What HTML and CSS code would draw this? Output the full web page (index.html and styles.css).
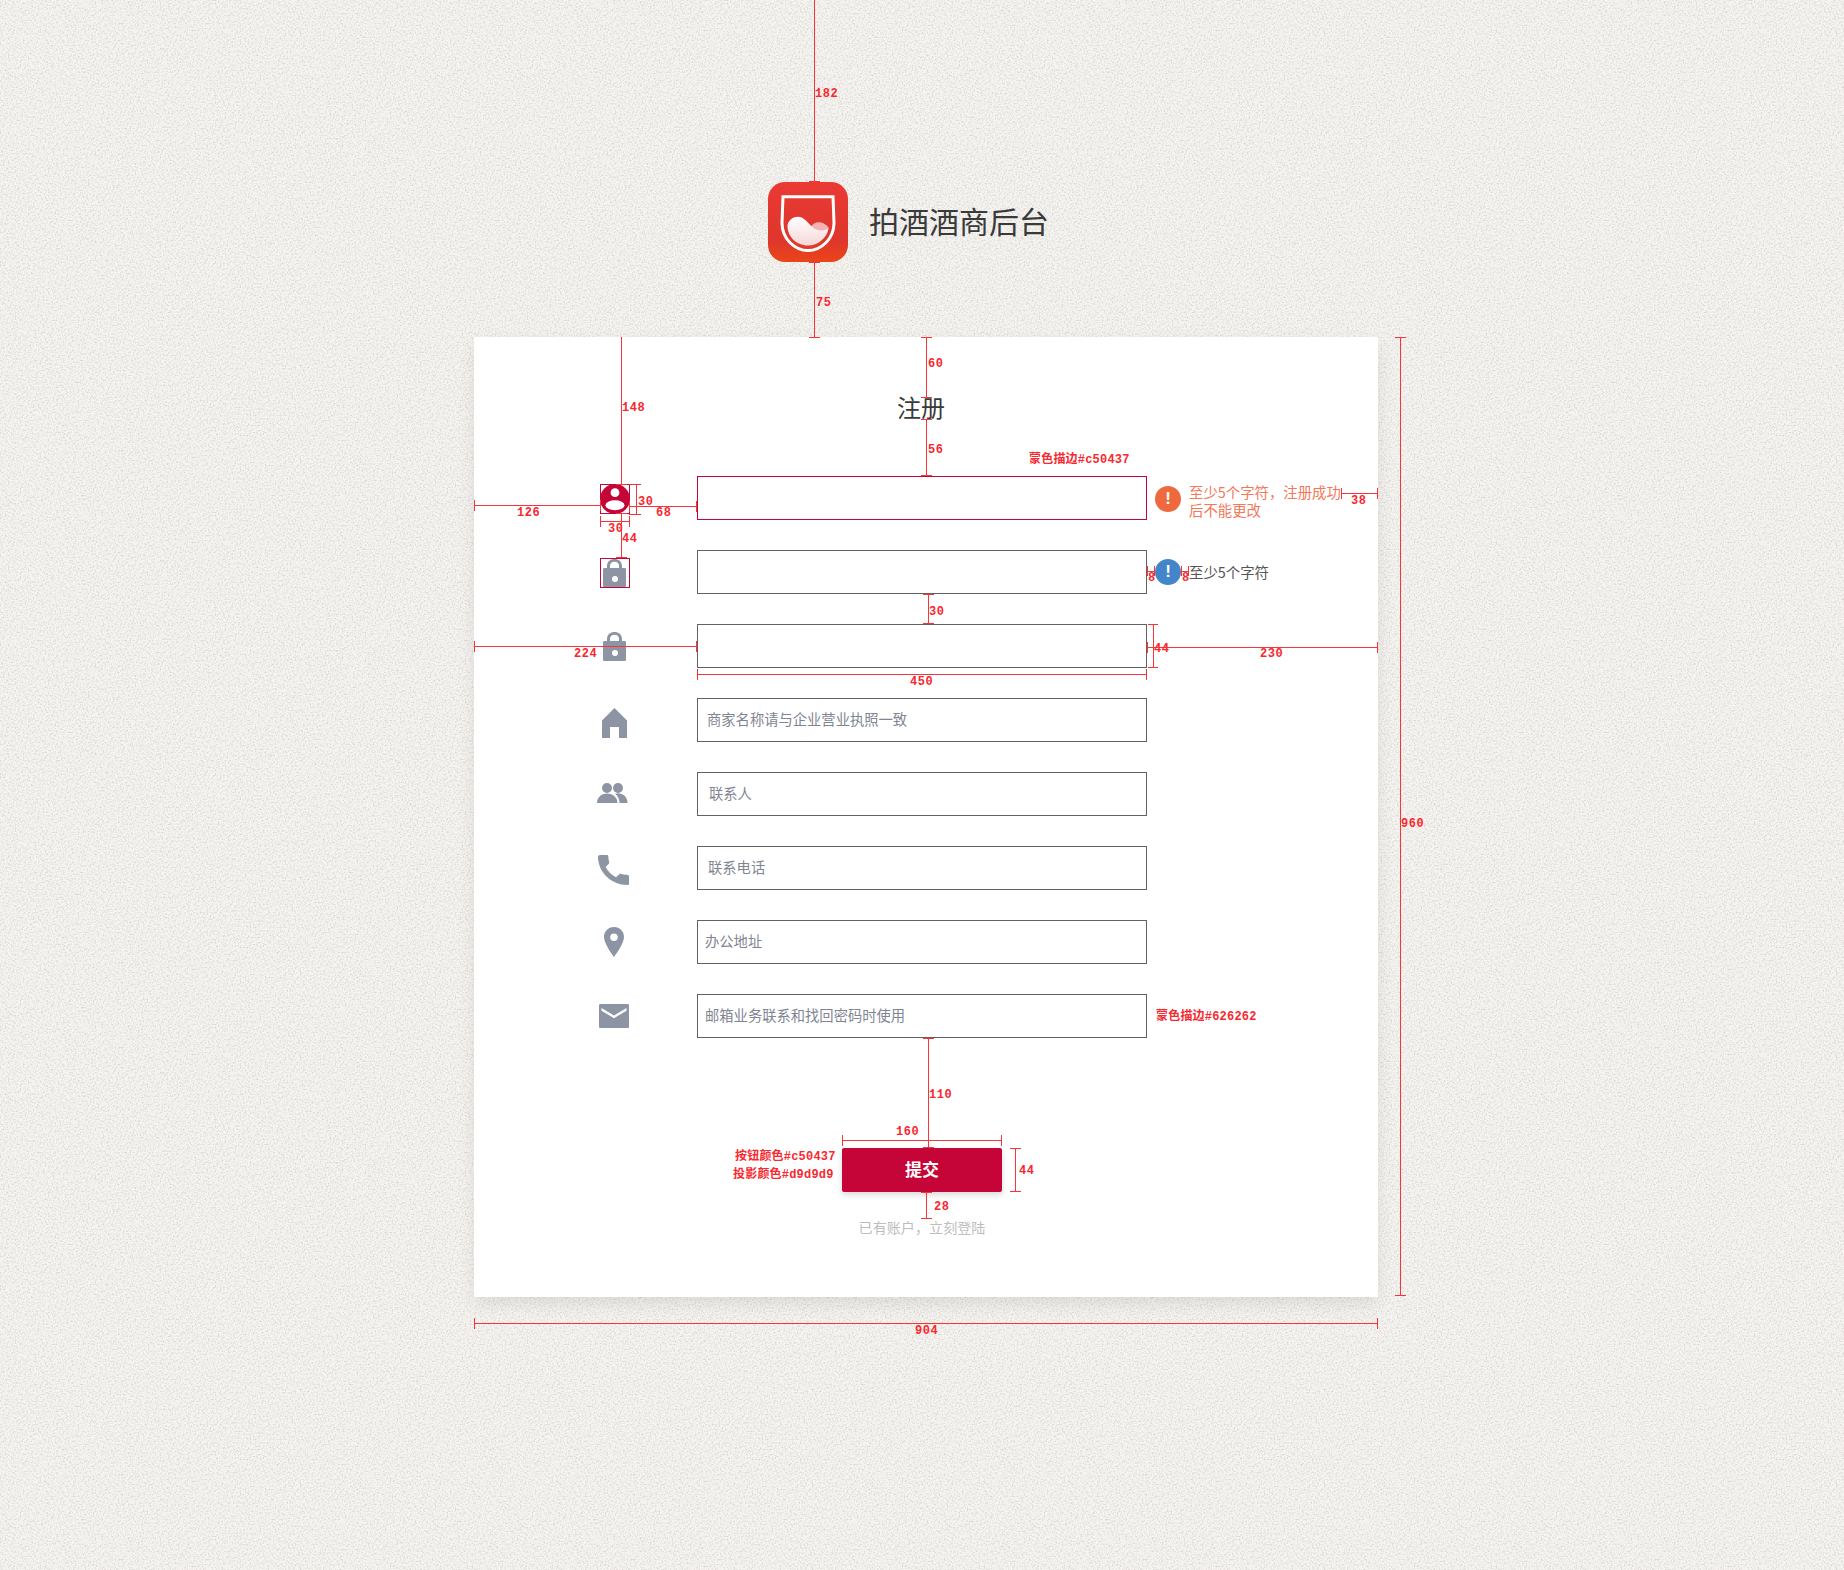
FILE: index.html
```html
<!DOCTYPE html>
<html lang="zh-CN">
<head>
<meta charset="utf-8">
<title>拍酒酒商后台 注册</title>
<link rel="stylesheet" href="styles.css">
</head>
<body>
<div class="page">
  <header class="brand">
    <svg class="logo" viewBox="0 0 80 80" aria-hidden="true">
      <defs>
        <linearGradient id="logoBg" x1="0" y1="0" x2="0" y2="1">
          <stop offset="0" stop-color="#ea3a33"/>
          <stop offset=".72" stop-color="#de362c"/>
          <stop offset="1" stop-color="#ea4519"/>
        </linearGradient>
        <linearGradient id="wave" x1="0" y1="0" x2="0" y2="1">
          <stop offset="0" stop-color="#ffffff"/>
          <stop offset="1" stop-color="#f5d8d8"/>
        </linearGradient>
      </defs>
      <rect width="80" height="80" rx="17" fill="url(#logoBg)"/>
      <path d="M15 14.800H65L66 41C66 57 53 68.600 40 68.600S14 57 14 41Z" fill="none" stroke="#fff" stroke-width="3"/>
      <path d="M42 46C46 39 54 38 61 46C58 50 50 51 45 49Z" fill="#f3b2b4"/>
      <path d="M19.500 43C21 36 30 32 36 37C41 41 45 47 50 48C54 49 58 48 60.500 46.500C59 56 50 63.500 40 63.500C28 63.500 19 54 19.500 43Z" fill="url(#wave)"/>
    </svg>
    <h1 class="brand-name">拍酒酒商后台</h1>
  </header>

  <main class="panel">
    <h2 class="panel-title">注册</h2>
    <div class="form">
      <svg class="ico" viewBox="0 0 30 30" aria-hidden="true">
        <circle cx="15" cy="16" r="15" fill="#c50437"/>
        <circle cx="15" cy="9.700" r="4.400" fill="#fff"/>
        <ellipse cx="15" cy="22.300" rx="9.500" ry="5" fill="#fff"/>
      </svg>
      <div class="field field-active"></div>
      <div class="hint hint-error">
        <span class="badge badge-error">!</span>
        <span class="hint-text">至少5个字符，注册成功后不能更改</span>
      </div>

      <svg class="ico" viewBox="0 0 30 30" aria-hidden="true">
        <path class="ico-fill" fill-rule="evenodd" d="M7 11V9C7 4.500 10.500 2 14.500 2S22 4.500 22 9V11H24.500C25.500 11 26 11.500 26 12.500V28.500C26 29.500 25.500 30 24.500 30H4.500C3.500 30 3 29.500 3 28.500V12.500C3 11.500 3.500 11 4.500 11ZM10 11H19V9C19 6.500 17.500 4.800 14.500 4.800S10 6.500 10 9ZM15 19A3 3 0 1 0 15 25 3 3 0 1 0 15 19Z"/>
      </svg>
      <div class="field"></div>
      <div class="hint">
        <span class="badge badge-info">!</span>
        <span class="hint-text">至少5个字符</span>
      </div>

      <svg class="ico" viewBox="0 0 30 30" aria-hidden="true">
        <path class="ico-fill" fill-rule="evenodd" d="M7 10V8C7 3.500 10.500 1 14.500 1S22 3.500 22 8V10H24.500C25.500 10 26 10.500 26 11.500V28.500C26 29.500 25.500 30 24.500 30H4.500C3.500 30 3 29.500 3 28.500V11.500C3 10.500 3.500 10 4.500 10ZM10 10H19V8C19 5.500 17.500 3.800 14.500 3.800S10 5.500 10 8ZM15 19A3 3 0 1 0 15 25 3 3 0 1 0 15 19Z"/>
      </svg>
      <div class="field"></div>
      <div class="hint"></div>

      <svg class="ico" viewBox="0 0 30 30" aria-hidden="true">
        <path class="ico-fill" d="M14.500 3L27 15.500V33H19V22H10V33H2V15.500Z"/>
      </svg>
      <div class="field field-name">商家名称请与企业营业执照一致</div>
      <div class="hint"></div>

      <svg class="ico" viewBox="0 0 30 30" aria-hidden="true">
        <circle class="ico-fill" cx="7" cy="9" r="5"/>
        <circle class="ico-fill" cx="18" cy="9" r="5"/>
        <path class="ico-fill" d="M-3 24C-3 17.500 2.500 14.500 7 14.500S17.500 17.500 17.500 24Z"/>
        <path class="ico-fill" d="M15 14.800C16 14.500 17 14.300 18 14.300C23 14.300 27.500 18 27.500 24H19.500C19.500 20 17.500 16.500 15 14.800Z"/>
      </svg>
      <div class="field field-contact">联系人</div>
      <div class="hint"></div>

      <svg class="ico" viewBox="0 0 30 30" aria-hidden="true">
        <path class="ico-fill" d="M.5 2H6.800C7.800 2 8.300 2.500 8.300 3.500C8.300 5.500 8.600 7.300 9.200 9C9.400 9.600 9.300 10.200 8.800 10.700L5.700 14C8 18.500 11.500 22 16 24.300L19.300 21.200C19.800 20.700 20.400 20.600 21 20.800C22.700 21.400 24.500 21.700 26.500 21.700C27.500 21.700 29 22.200 29 23.200V30.500C29 31.500 28.500 32 27.500 32C11.500 32 -2 19.500 -2 3.500C-2 2.500 -.5 2 .5 2Z"/>
      </svg>
      <div class="field field-phone">联系电话</div>
      <div class="hint"></div>

      <svg class="ico" viewBox="0 0 30 30" aria-hidden="true">
        <path class="ico-fill" fill-rule="evenodd" d="M14 0C20 0 24 4.500 24 10C24 17 14 30 14 30S4 17 4 10C4 4.500 8 0 14 0ZM14 6.500A3.800 3.800 0 1 0 14 14.100 3.800 3.800 0 1 0 14 6.500Z"/>
      </svg>
      <div class="field field-office">办公地址</div>
      <div class="hint"></div>

      <svg class="ico" viewBox="0 0 30 30" aria-hidden="true">
        <path class="ico-fill" fill-rule="evenodd" d="M.5 3H27.500C28.500 3 29 3.500 29 4.500V25.500C29 26.500 28.500 27 27.500 27H.5C-.5 27 -1 26.500 -1 25.500V4.500C-1 3.500 -.5 3 .5 3ZM1.500 7L14 14.400 26.500 7V9.800L14 17.200 1.500 9.800Z"/>
      </svg>
      <div class="field field-mail">邮箱业务联系和找回密码时使用</div>
      <div class="hint"></div>
    </div>

    <button class="submit" type="button">提交</button>
    <p class="login-link">已有账户，立刻登陆</p>
  </main>

  <svg class="marks" viewBox="0 0 1844 1570" aria-hidden="true">
    <rect class="box" x="600.500" y="484.500" width="29" height="29"/>
    <rect class="box" x="600.500" y="558.500" width="29" height="29"/>
    <path class="line" d="
      M814.500 0V181M809 181.500H820
      M814.500 262V337M809 262.500H820M809 337.500H820
      M926.500 337V397M921 337.500H932M921 397.500H932
      M926.500 420V476M921 419.500H932M921 475.500H932
      M621.500 337V484M616 484.500H627
      M621.500 514V558M616 513.500H627M616 557.500H627
      M474 505.500H600M474.500 500V511M600.500 500V511
      M629 506.500H697M629.500 501V512M696.500 501V512
      M629 484.500H641M629 514.500H641M636.500 484V514
      M600 521.500H629M600.500 516V527M629.500 516V527
      M474 646.500H697M474.500 641V652M696.500 641V652
      M697 674.500H1147M697.500 669V680M1146.500 669V680
      M1153.500 624V667M1148 624.500H1158M1148 667.500H1158
      M1147 647.500H1378M1147.500 642V653M1377.500 642V653
      M1341 493.500H1378M1341.500 488V499M1377.500 488V499
      M1147 571.500H1155M1147.500 566V576M1154.500 566V576
      M1181 571.500H1189M1181.500 566V576M1188.500 566V576
      M928.500 594V624M923 594.500H934M923 623.500H934
      M1400.500 337V1295M1395 337.500H1406M1395 1295.500H1406
      M474 1323.500H1378M474.500 1318V1329M1377.500 1318V1329
      M928.500 1038V1148M923 1038.500H934M923 1147.500H934
      M842 1140.500H1002M842.500 1135V1146M1001.500 1135V1146
      M1015.500 1148V1191M1010 1148.500H1021M1010 1191.500H1021
      M926.500 1192V1219M921 1192.500H932M921 1218.500H932"/>
    <text class="num" x="815" y="97">182</text>
    <text class="num" x="816" y="306">75</text>
    <text class="num" x="928" y="367">60</text>
    <text class="num" x="928" y="453">56</text>
    <text class="num" x="622" y="411">148</text>
    <text class="num" x="517" y="516">126</text>
    <text class="num" x="656" y="516">68</text>
    <text class="num" x="638" y="505">30</text>
    <text class="num" x="608" y="532">30</text>
    <text class="num" x="622" y="542">44</text>
    <text class="num" x="1148" y="581">8</text>
    <text class="num" x="1182" y="581">8</text>
    <text class="num" x="929" y="615">30</text>
    <text class="num" x="574" y="657">224</text>
    <text class="num" x="910" y="685">450</text>
    <text class="num" x="1154" y="652">44</text>
    <text class="num" x="1260" y="657">230</text>
    <text class="num" x="1351" y="504">38</text>
    <text class="num" x="1401" y="827">960</text>
    <text class="num" x="915" y="1334">904</text>
    <text class="num" x="929" y="1098">110</text>
    <text class="num" x="896" y="1135">160</text>
    <text class="num" x="1019" y="1174">44</text>
    <text class="num" x="934" y="1210">28</text>
    <text class="note" x="1029" y="463">蒙色描边#c50437</text>
    <text class="note" x="1156" y="1020">蒙色描边#626262</text>
    <text class="note" x="735" y="1160">按钮颜色#c50437</text>
    <text class="note" x="733" y="1178">投影颜色#d9d9d9</text>
  </svg>
</div>
</body>
</html>
```

FILE: styles.css
```css
* { box-sizing: border-box; }

html, body { margin: 0; padding: 0; }

body {
  font-family: "Noto Sans CJK SC", "Liberation Sans", sans-serif;
  color: #3b3b3b;
  background-color: #f4f2ee;
}

.page {
  position: relative;
  width: 1844px;
  height: 1570px;
  overflow: hidden;
  padding-top: 182px;
  background-color: #f6f4f1;
  background-image: url("data:image/svg+xml,%3Csvg xmlns='http://www.w3.org/2000/svg' width='512' height='512'%3E%3Cfilter id='n' x='0' y='0' width='100%25' height='100%25'%3E%3CfeTurbulence type='fractalNoise' baseFrequency='.6' numOctaves='3' stitchTiles='stitch'/%3E%3CfeColorMatrix values='0 0 0 0 .5 0 0 0 0 .47 0 0 0 0 .42 1.2 0 0 0 -.52'/%3E%3C/filter%3E%3Crect width='512' height='512' filter='url(%23n)'/%3E%3C/svg%3E");
}

.brand {
  display: flex;
  align-items: center;
  gap: 21px;
  height: 80px;
  margin-left: 768px;
}

.logo { width: 80px; height: 80px; flex: none; }

.brand-name {
  margin: 0 0 4px;
  font-size: 30px;
  font-weight: 400;
  line-height: 40px;
  color: #3a3a3a;
}

.panel {
  width: 904px;
  height: 960px;
  margin: 75px 0 0 474px;
  padding-top: 58px;
  background: #fff;
  box-shadow: 0 7px 16px -2px rgba(90, 85, 75, .16);
}

.panel-title {
  margin: 0 0 58px 423px;
  font-size: 24px;
  font-weight: 400;
  line-height: 23px;
  color: #3a3a3a;
}

.form {
  display: grid;
  grid-template-columns: 30px 450px 1fr;
  column-gap: 67px;
  row-gap: 30px;
  padding-left: 126px;
  align-items: center;
}

.ico { width: 30px; height: 30px; overflow: visible; }
.ico-fill { fill: #8d94a3; }

.field {
  height: 44px;
  border: 1px solid #626262;
  font-size: 14.300px;
  line-height: 40px;
  color: #7f8593;
  white-space: nowrap;
}

.field-active { border-color: #c50437; }
.field-name { padding-left: 9px; }
.field-contact { padding-left: 11px; }
.field-phone { padding-left: 10px; }
.field-office { padding-left: 7px; }
.field-mail { padding-left: 7px; }

.hint {
  display: flex;
  align-items: center;
  gap: 8px;
  margin-left: -59px;
  width: 194px;
  font-size: 14.400px;
  line-height: 18px;
  color: #555;
}

.hint-text { flex: 1; }
.hint-error { color: #f4775a; }
.hint-error .hint-text { padding-top: 6px; }

.badge {
  flex: none;
  width: 26px;
  height: 26px;
  border-radius: 50%;
  font-family: "Liberation Sans", sans-serif;
  font-size: 17px;
  font-weight: 700;
  line-height: 26px;
  text-align: center;
  color: #fff;
}

.badge-error { background: #ee6a3e; margin-top: 2px; }
.badge-info { background: #4285c8; }

.submit {
  display: block;
  width: 160px;
  height: 44px;
  margin: 110px 0 0 368px;
  padding: 0 0 4px;
  border: 0;
  border-radius: 2px;
  background: #c50437;
  box-shadow: 0 3px 6px #d9d9d9;
  font-family: inherit;
  font-size: 17px;
  font-weight: 700;
  color: #fff;
}

.login-link {
  width: 160px;
  margin: 26px 0 0 368px;
  font-size: 14.100px;
  line-height: 18px;
  text-align: center;
  white-space: nowrap;
  color: #bdbdbd;
}

.marks {
  position: absolute;
  top: 0;
  left: 0;
  width: 1844px;
  height: 1570px;
  pointer-events: none;
}

.line {
  fill: none;
  stroke: #f8343a;
  stroke-width: 1;
  shape-rendering: crispEdges;
}

.box {
  fill: none;
  stroke: #c50437;
  stroke-width: 1;
  shape-rendering: crispEdges;
}

.num, .note {
  fill: #f8282f;
  font-family: "Liberation Mono", "Noto Sans CJK SC", monospace;
  font-size: 12px;
  font-weight: 700;
  letter-spacing: .5px;
}

.note { letter-spacing: .2px; }
```
